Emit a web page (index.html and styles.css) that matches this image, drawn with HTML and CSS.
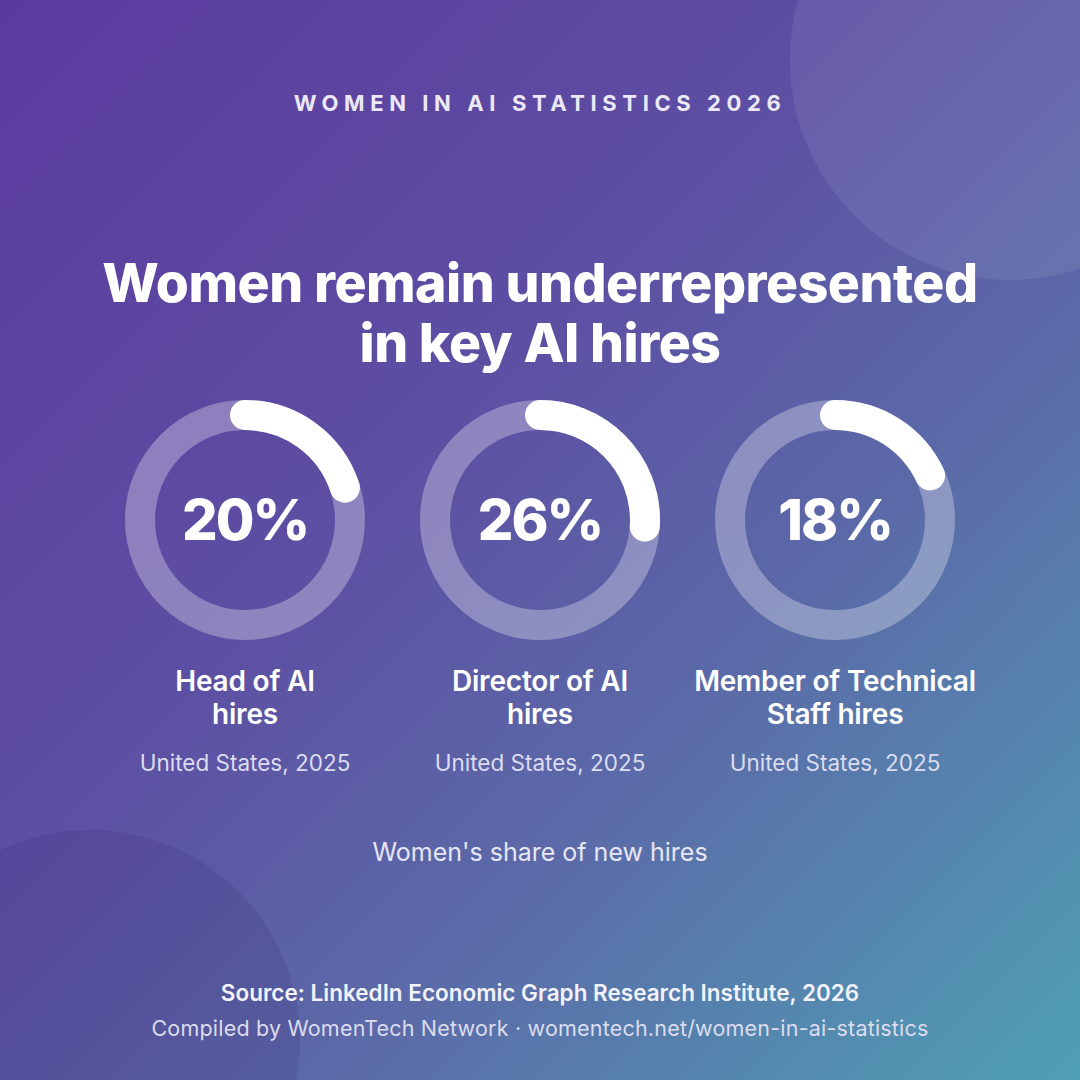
FILE: index.html
```html
<!DOCTYPE html>
<html lang="en">
<head>
<meta charset="utf-8">
<title>Women in AI Statistics 2026</title>
<link rel="stylesheet" href="styles.css">
</head>
<body>
<div class="card">
  <div class="blob blob-top"></div>
  <div class="blob blob-bottom"></div>
  <div class="content">
    <div class="eyebrow">WOMEN IN AI STATISTICS 2026</div>
    <h1 class="headline">Women remain underrepresented<br>in key AI hires</h1>
    <div class="stats">
      <div class="stat">
        <div class="ring">
          <svg viewBox="0 0 240 240" width="240" height="240">
            <circle class="track" cx="120" cy="120" r="105"/>
            <circle class="bar" cx="120" cy="120" r="105" stroke-dasharray="131.9 659.7" transform="rotate(-90 120 120)"/>
          </svg>
          <div class="pct">20%</div>
        </div>
        <div class="label">Head of AI<br>hires</div>
        <div class="sub">United States, 2025</div>
      </div>
      <div class="stat">
        <div class="ring">
          <svg viewBox="0 0 240 240" width="240" height="240">
            <circle class="track" cx="120" cy="120" r="105"/>
            <circle class="bar" cx="120" cy="120" r="105" stroke-dasharray="171.5 659.7" transform="rotate(-90 120 120)"/>
          </svg>
          <div class="pct">26%</div>
        </div>
        <div class="label">Director of AI<br>hires</div>
        <div class="sub">United States, 2025</div>
      </div>
      <div class="stat">
        <div class="ring">
          <svg viewBox="0 0 240 240" width="240" height="240">
            <circle class="track" cx="120" cy="120" r="105"/>
            <circle class="bar" cx="120" cy="120" r="105" stroke-dasharray="118.75 659.7" transform="rotate(-90 120 120)"/>
          </svg>
          <div class="pct">18%</div>
        </div>
        <div class="label">Member of Technical<br>Staff hires</div>
        <div class="sub">United States, 2025</div>
      </div>
    </div>
    <div class="caption">Women's share of new hires</div>
    <div class="source">Source: LinkedIn Economic Graph Research Institute, 2026</div>
    <div class="credit">Compiled by WomenTech Network · womentech.net/women-in-ai-statistics</div>
  </div>
</div>
</body>
</html>
```
FILE: styles.css
```css
html, body {
  margin: 0;
  padding: 0;
}
body {
  font-family: "Inter", "Open Sans", "Liberation Sans", sans-serif;
  color: #ffffff;
}
.card {
  position: relative;
  width: 1080px;
  height: 1080px;
  overflow: hidden;
  background: linear-gradient(135deg, #5b3a9e 0%, #5d4fa3 40%, #5b6aa8 65%, #4fa0b4 100%);
}
.blob {
  position: absolute;
  border-radius: 50%;
}
.blob-top {
  width: 440px;
  height: 440px;
  left: 790px;
  top: -160px;
  background: rgba(255, 255, 255, 0.08);
}
.blob-bottom {
  width: 420px;
  height: 420px;
  left: -120px;
  top: 830px;
  background: rgba(40, 20, 90, 0.12);
}
.content {
  position: relative;
  display: flex;
  flex-direction: column;
  align-items: center;
  text-align: center;
}
.eyebrow {
  margin-top: 89px;
  font-size: 22px;
  line-height: 28px;
  font-weight: 700;
  letter-spacing: 5.6px;
  color: #ece8f6;
}
.headline {
  margin: 136px 0 0;
  font-size: 53.5px;
  line-height: 60px;
  font-weight: 800;
  letter-spacing: -0.5px;
  color: #ffffff;
}
.stats {
  margin-top: 27px;
  display: grid;
  grid-template-columns: repeat(3, 280px);
  column-gap: 15px;
}
.stat {
  display: flex;
  flex-direction: column;
  align-items: center;
}
.ring {
  position: relative;
  width: 240px;
  height: 240px;
}
.ring svg {
  display: block;
}
.track {
  fill: none;
  stroke: rgba(255, 255, 255, 0.3);
  stroke-width: 30;
}
.bar {
  fill: none;
  stroke: #ffffff;
  stroke-width: 30;
  stroke-linecap: round;
}
.pct {
  position: absolute;
  inset: 0;
  display: flex;
  align-items: center;
  justify-content: center;
  font-size: 56px;
  font-weight: 800;
  letter-spacing: -2px;
}
.label {
  margin-top: 25px;
  font-size: 28px;
  line-height: 33px;
  font-weight: 600;
  letter-spacing: -0.2px;
  white-space: nowrap;
}
.sub {
  margin-top: 18px;
  font-size: 22.5px;
  line-height: 28px;
  font-weight: 400;
  color: #dcdcf0;
}
.caption {
  margin-top: 60px;
  font-size: 25px;
  line-height: 30px;
  color: #e6e6f4;
}
.source {
  margin-top: 112px;
  font-size: 22.5px;
  line-height: 28px;
  font-weight: 600;
  color: #f2f2fa;
}
.credit {
  margin-top: 7px;
  font-size: 21.5px;
  line-height: 28px;
  letter-spacing: 0.2px;
  color: #dcdcee;
}
```
